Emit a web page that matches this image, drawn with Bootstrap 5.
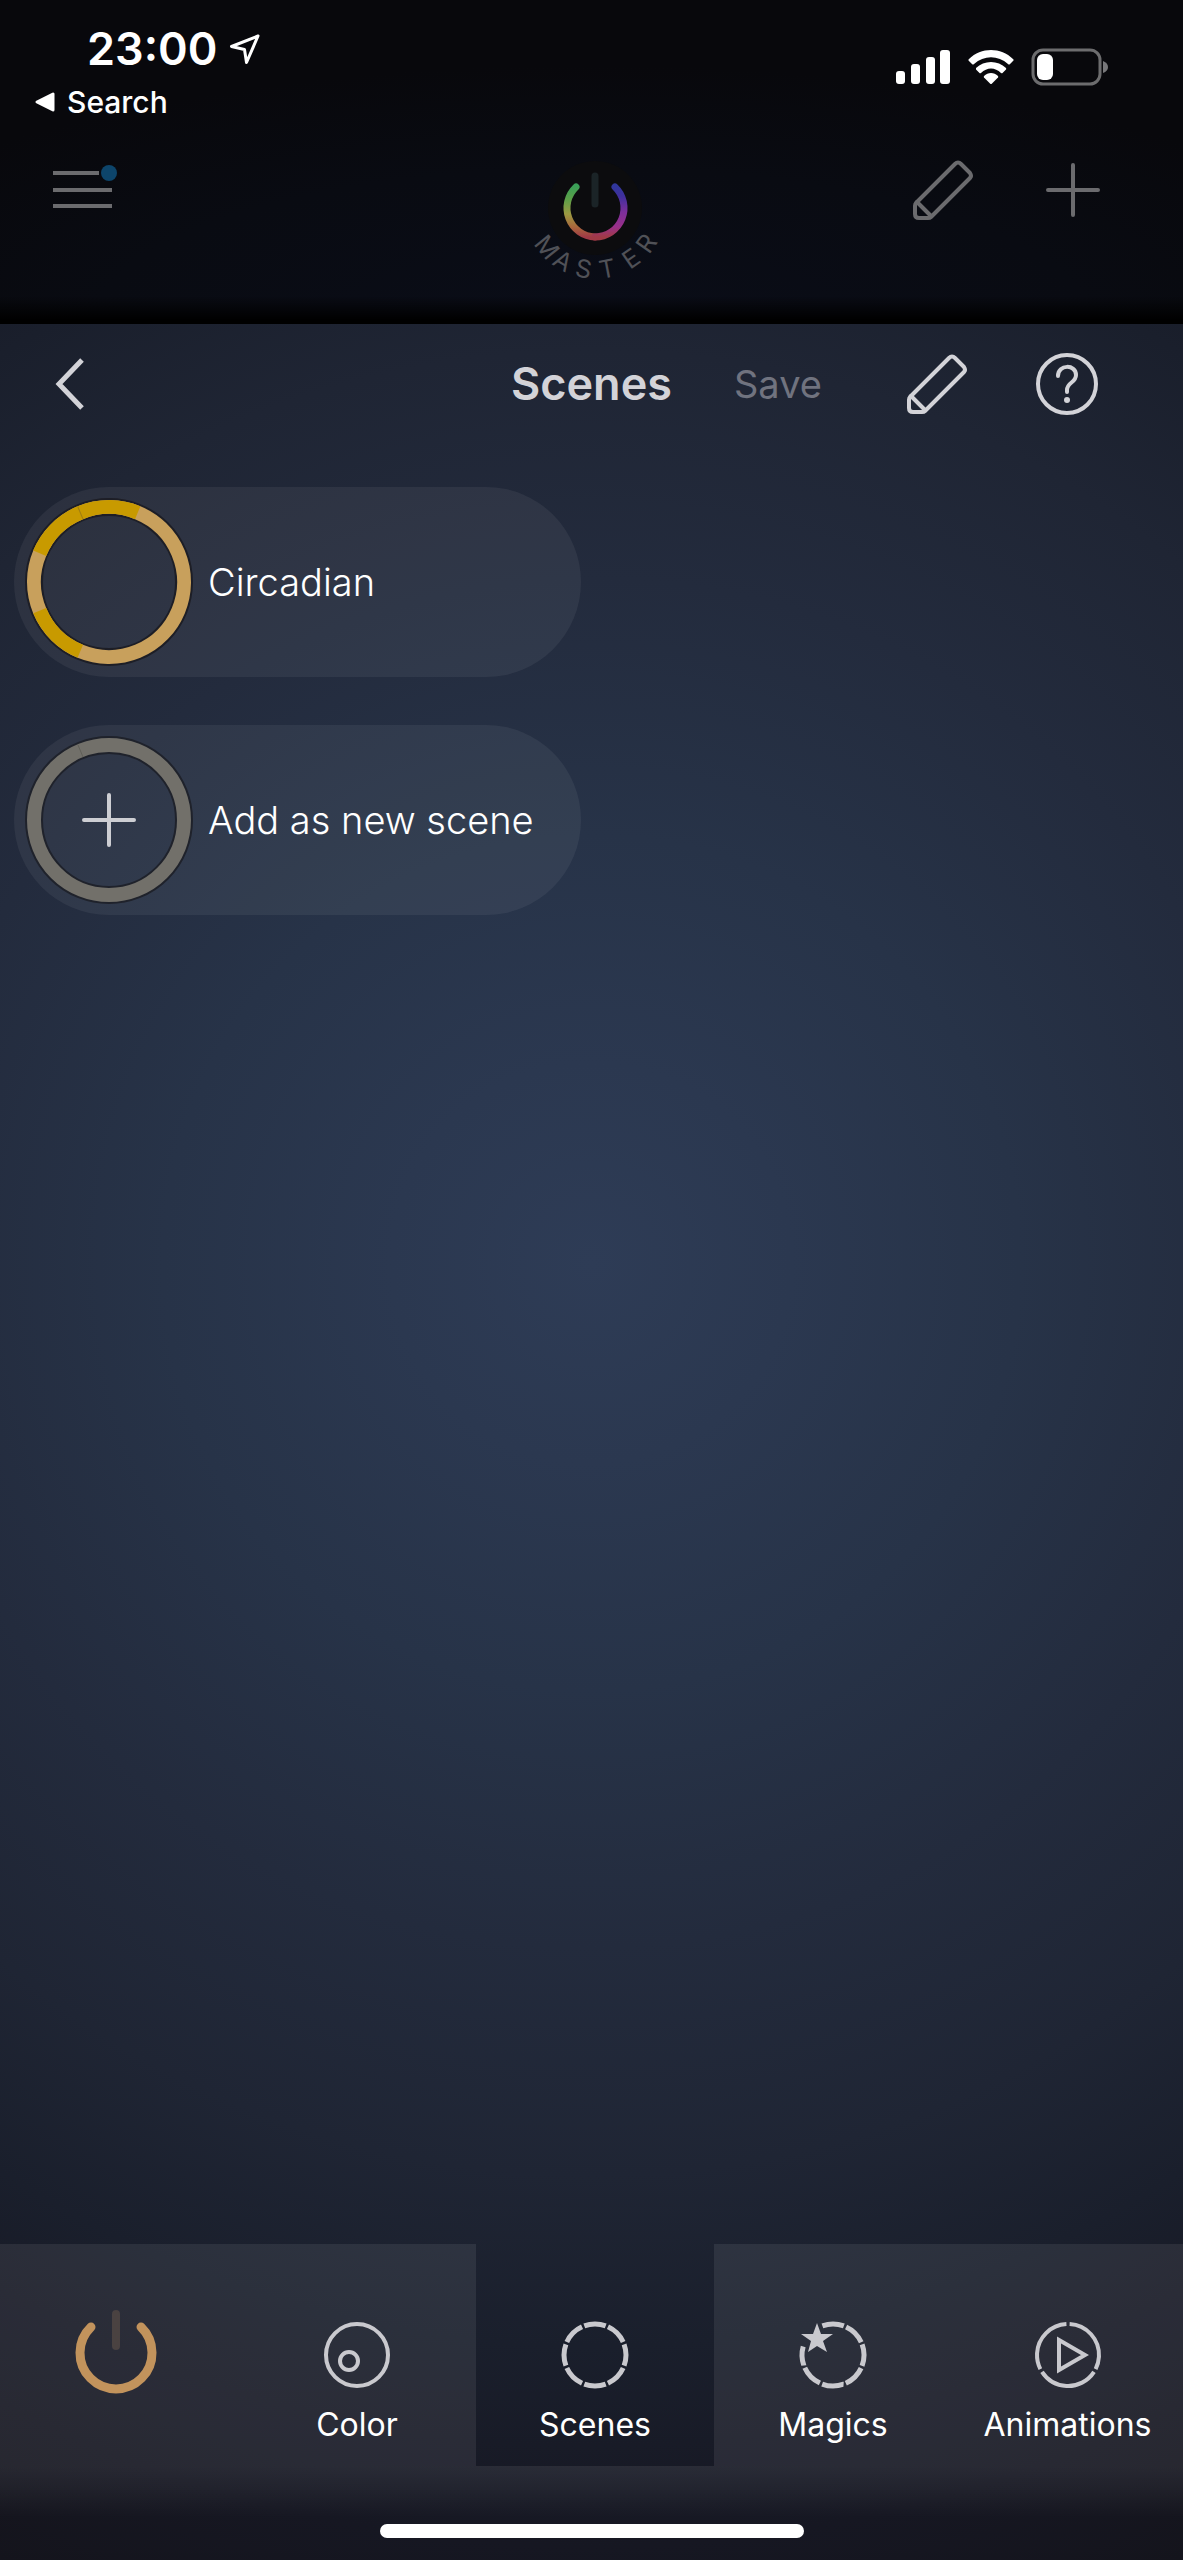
<!DOCTYPE html>
<html lang="en">
<head>
<meta charset="utf-8">
<meta name="viewport" content="width=device-width, initial-scale=1">
<title>Scenes</title>
<link href="https://cdn.jsdelivr.net/npm/bootstrap@5.3.0/dist/css/bootstrap.min.css" rel="stylesheet">
<style>
  body { font-family: Inter, "Liberation Sans", sans-serif; background: #07080d; color: #fff; }
  svg { display: block; flex: none; overflow: visible; }

  .backdrop {
    background:
      linear-gradient(to top, #000 0, #000 4px, transparent 28px),
      radial-gradient(ellipse 70% 80% at 50% 100%, #0a0d18 0%, #090b12 60%, #08080c 100%);
  }
  .status-side { padding: 20px 75px 0 35px; }
  .clock { font-size: 45px; line-height: 58px; font-weight: 600; padding-left: 52px; gap: 12px; }
  .back-app { font-size: 30px; line-height: 48px; font-weight: 500; gap: 12px; }
  .back-app, .back-app:hover { color: #fff; text-decoration: none; }
  .indicators { padding-top: 29px; gap: 18px; }

  .three-part { display: grid; grid-template-columns: 1fr auto 1fr; }
  .master-bar { padding: 32px 47px 36px 53px; color: #6b6b6e; }
  .icon-btn { background: none; border: 0; padding: 0; color: inherit; }
  .icon-pair { gap: 66px; padding-right: 31px; }

  .sheet {
    background: radial-gradient(circle farthest-corner at 50% 42%,
      #2e3c56 0%, #2b3850 14%, #273348 30%, #232b3d 48%, #1f2534 64%, #1a1f2c 76%, #161722 90%, #14141c 100%);
  }
  .sheet-head { height: 120px; padding: 0 55px; color: #d3d3d8; }
  .sheet-title { font-size: 45px; line-height: 56px; font-weight: 600; }
  .save-btn { font-size: 38px; line-height: 48px; color: #70737f; margin-left: 62px; }
  .sheet-head .icon-pair { padding-right: 29px; }

  .scene-grid { display: grid; grid-template-columns: 1fr 1fr; gap: 48px 21px; padding: 43px 14px; }
  .scene-pill {
    grid-column: 1; height: 190px; border: 0; border-radius: 95px; padding: 0 12px; gap: 16px;
    background: rgba(255, 255, 255, .06); color: #fff; font-size: 38px; line-height: 48px; font-weight: 300;
  }

  .tab-strip { display: grid; grid-template-columns: repeat(4, 238fr) 231fr; }
  .tab-item {
    height: 222px; gap: 13px; padding-top: 72px; font-size: 32px; line-height: 40px;
    background: rgba(255, 255, 255, .08); color: #fff; text-decoration: none;
  }
  .tab-item:hover { color: #fff; }
  .tab-item.is-current { background: none; }
  .tab-item svg { color: #c9c9ce; }
  .power-tab { background: rgba(255, 255, 255, .08); padding: 64px 6px 0 0; height: 222px; }
  .home-zone {
    height: 94px; padding-bottom: 22px;
    background: linear-gradient(rgba(255, 255, 255, .08), rgba(255, 255, 255, .05) 22%, transparent 55%);
  }
  .home-pill { width: 424px; height: 14px; border-radius: 7px; background: #fff; }
</style>
</head>
<body class="d-flex flex-column min-vh-100">

<svg width="0" height="0" class="position-absolute" aria-hidden="true">
  <defs>
    <linearGradient id="ringLeft" gradientUnits="userSpaceOnUse" x1="0" y1="28" x2="0" y2="79">
      <stop offset="0" stop-color="#3a9f57"/><stop offset=".25" stop-color="#5a9f48"/><stop offset=".55" stop-color="#9c9a42"/><stop offset=".8" stop-color="#a9683c"/><stop offset="1" stop-color="#a03a46"/>
    </linearGradient>
    <linearGradient id="ringRight" gradientUnits="userSpaceOnUse" x1="0" y1="28" x2="0" y2="79">
      <stop offset="0" stop-color="#30379c"/><stop offset=".2" stop-color="#3f2f9c"/><stop offset=".5" stop-color="#7a2f9a"/><stop offset=".8" stop-color="#99308a"/><stop offset="1" stop-color="#a03a46"/>
    </linearGradient>
    <symbol id="pencil" viewBox="0 0 64 64">
      <g fill="none" stroke="currentColor" stroke-width="4" stroke-linejoin="round" stroke-linecap="round">
        <path d="M5 45 L44 6 Q47 3 50 6 L59 15 Q61 18 59 20 L20 59 Q19 60 17 60 L8 60 Q4 60 4 56 L4 48 Q4 46 5 45 Z"/>
        <path d="M6 44 L20 58"/>
      </g>
    </symbol>
    <symbol id="plus" viewBox="0 0 64 64">
      <path d="M32 7 V57 M7 32 H57" fill="none" stroke="currentColor" stroke-width="4" stroke-linecap="round"/>
    </symbol>
  </defs>
</svg>

<header class="backdrop">
  <div class="status-side d-flex justify-content-between align-items-start">
    <div>
      <div class="clock d-flex align-items-center">
        <span>23:00</span>
        <svg width="32" height="32" viewBox="0 0 32 32" aria-hidden="true"><path d="M29 3 L2.500 13.500 L15.500 16.500 L17.500 29.500 Z" fill="none" stroke="#fff" stroke-width="3" stroke-linejoin="round"/></svg>
      </div>
      <a href="#" class="back-app d-flex align-items-center">
        <svg width="20" height="20" viewBox="0 0 20 20" aria-hidden="true"><path d="M2 10 L18 2 V18 Z" fill="#fff" stroke="#fff" stroke-width="3" stroke-linejoin="round"/></svg>
        <span>Search</span>
      </a>
    </div>
    <div class="indicators d-flex align-items-center">
      <svg width="54" height="34" viewBox="0 0 54 34" fill="#fff" role="img" aria-label="Signal">
        <rect x="0" y="21" width="9" height="13" rx="3"/><rect x="15" y="14" width="9" height="20" rx="3"/><rect x="30" y="7" width="9" height="27" rx="3"/><rect x="44" y="0" width="10" height="34" rx="3"/>
      </svg>
      <svg width="46" height="34" viewBox="0 0 46 34" fill="#fff" role="img" aria-label="Wi-Fi">
        <path d="M0.500 10.500 Q0 9.500 1 9 C13 -3 33 -3 45 9 Q46 9.500 45.500 10.500 L42 14 Q41 15 40 14 C30 5 16 5 6 14 Q5 15 4 14 Z"/>
        <path d="M8 18 C16 10 30 10 38 18 Q38.500 19 38 19.500 L34.500 23 Q34 23.500 33 23 C27 17 19 17 13 23 Q12 23.500 11.500 23 L8 19.500 Z"/>
        <path d="M16 26 C20 22 26 22 30 26 Q30.500 27 30 27.500 L24 33.500 Q23 34.500 22 33.500 L16 27.500 Q15.500 27 16 26 Z"/>
      </svg>
      <svg width="76" height="36" viewBox="0 0 76 36" role="img" aria-label="Battery low">
        <rect x="1" y="1" width="67" height="34" rx="10" fill="none" stroke="#6c6c6e" stroke-width="3"/>
        <rect x="5" y="5" width="16" height="26" rx="6" fill="#fff"/>
        <path d="M71 12 Q76 14 76 18 Q76 22 71 24 Z" fill="#77777a"/>
      </svg>
    </div>
  </div>

  <div class="master-bar three-part align-items-start">
    <button type="button" class="icon-btn me-auto" aria-label="Menu">
      <svg width="64" height="64" viewBox="0 0 64 64"><path d="M0 15 H46 M0 32 H59 M0 48 H59" fill="none" stroke="currentColor" stroke-width="4"/><circle cx="56" cy="15" r="8" fill="#0d456b"/></svg>
    </button>
    <button type="button" class="icon-btn" aria-label="Master power">
      <svg width="140" height="130" viewBox="0 0 140 130">
        <circle cx="70" cy="50" r="47" fill="#0c0c0e"/>
        <path d="M70 18 V46" stroke="#1b2427" stroke-width="7" stroke-linecap="round"/>
        <path d="M51 29 A29 29 0 0 0 70 79" fill="none" stroke="url(#ringLeft)" stroke-width="7" stroke-linecap="round"/>
        <path d="M90 29 A29 29 0 0 1 70 79" fill="none" stroke="url(#ringRight)" stroke-width="7" stroke-linecap="round"/>
        <text x="8 26 49 76 105 124" y="86 106 118 121 112 97" rotate="51 31 11 -11 -35 -55" font-size="25" font-weight="400" fill="#505157">MASTER</text>
      </svg>
    </button>
    <div class="icon-pair d-flex justify-content-end">
      <button type="button" class="icon-btn" aria-label="Edit"><svg width="64" height="64"><use href="#pencil"/></svg></button>
      <button type="button" class="icon-btn" aria-label="Add"><svg width="64" height="64"><use href="#plus"/></svg></button>
    </div>
  </div>
</header>

<div class="sheet d-flex flex-column flex-grow-1">
  <div class="sheet-head three-part align-items-center">
    <button type="button" class="icon-btn me-auto" aria-label="Back">
      <svg width="30" height="52" viewBox="0 0 30 52"><path d="M27 2 L4 26 L27 50" fill="none" stroke="currentColor" stroke-width="5"/></svg>
    </button>
    <h1 class="sheet-title m-0">Scenes</h1>
    <div class="d-flex align-items-center justify-content-between">
      <button type="button" class="icon-btn save-btn">Save</button>
      <div class="icon-pair d-flex">
        <button type="button" class="icon-btn" aria-label="Edit scenes"><svg width="64" height="64"><use href="#pencil"/></svg></button>
        <button type="button" class="icon-btn" aria-label="Help">
          <svg width="64" height="64" viewBox="0 0 64 64" fill="none" stroke="currentColor" stroke-width="4">
            <circle cx="32" cy="32" r="29"/>
            <path d="M23 24 C23 12 41 12 41 23 C41 31 32 30 32 38 V40" stroke-linecap="round"/>
            <circle cx="32" cy="48" r="3" fill="currentColor" stroke="none"/>
          </svg>
        </button>
      </div>
    </div>
  </div>

  <main class="scene-grid flex-grow-1 align-content-start">
    <button type="button" class="scene-pill d-flex align-items-center text-start">
      <svg width="166" height="166" viewBox="-83 -83 166 166" fill="none" stroke-width="14" aria-hidden="true">
        <circle r="75" stroke="#1d1e26" stroke-width="18"/>
        <g transform="rotate(-67.500)">
          <circle r="75" stroke="#c8a05c"/>
          <path d="M-75 0 A75 75 0 0 1 -53 -53" stroke="#c89a00"/>
          <path d="M0 -75 A75 75 0 0 1 75 0" stroke="#c89a00"/>
          <path d="M48 -48 L58 -58" stroke="#a07d10" stroke-width="1"/>
        </g>
      </svg>
      <span>Circadian</span>
    </button>
    <button type="button" class="scene-pill d-flex align-items-center text-start">
      <svg width="166" height="166" viewBox="-83 -83 166 166" fill="none" aria-hidden="true">
        <circle r="75" stroke="#1f222b" stroke-width="18"/>
        <circle r="75" stroke="#72706a" stroke-width="14"/>
        <path d="M-26 -63 L-31 -75" stroke="#605f58" stroke-width="1"/>
        <path d="M0 -25 V25 M-25 0 H25" stroke="#cdced3" stroke-width="4" stroke-linecap="round"/>
      </svg>
      <span>Add as new scene</span>
    </button>
  </main>

  <footer>
    <nav class="tab-strip" aria-label="Modes">
      <button type="button" class="icon-btn power-tab d-flex justify-content-center" aria-label="Power">
        <svg width="90" height="90" viewBox="0 0 90 90" fill="none" stroke-linecap="round">
          <path d="M45 6 V38" stroke="#4a4241" stroke-width="8"/>
          <path d="M20 19 A36 36 0 1 0 70 19" stroke="#c2935c" stroke-width="9"/>
        </svg>
      </button>
      <a href="#" class="tab-item d-flex flex-column align-items-center">
        <svg width="68" height="76" viewBox="0 0 68 76" fill="none" stroke="currentColor" stroke-width="4" aria-hidden="true"><circle cx="34" cy="39" r="31"/><circle cx="26" cy="45" r="9"/></svg>
        <span>Color</span>
      </a>
      <a href="#" class="tab-item is-current d-flex flex-column align-items-center" aria-current="page">
        <svg width="68" height="76" viewBox="0 0 68 76" fill="none" stroke="currentColor" stroke-width="5" aria-hidden="true"><circle cx="34" cy="39" r="31" pathLength="80" stroke-dasharray="9 1" stroke-dashoffset="4.500"/></svg>
        <span>Scenes</span>
      </a>
      <a href="#" class="tab-item d-flex flex-column align-items-center">
        <svg width="68" height="76" viewBox="0 0 68 76" fill="none" stroke="currentColor" stroke-width="5" aria-hidden="true">
          <g transform="rotate(-110 34 39)"><circle cx="34" cy="39" r="31" pathLength="80" stroke-dasharray="9 1 9 1 9 1 9 1 9 1 9 1 8 12"/></g>
          <path d="M18 7 L22 18 L34 18 L24 25 L28 36 L18 30 L9 36 L12 25 L2 18 L14 18 Z" fill="currentColor" stroke="none"/>
        </svg>
        <span>Magics</span>
      </a>
      <a href="#" class="tab-item d-flex flex-column align-items-center">
        <svg width="68" height="76" viewBox="0 0 68 76" fill="none" stroke="currentColor" stroke-width="4" aria-hidden="true">
          <g transform="rotate(-87 34 39)"><circle cx="34" cy="39" r="31" pathLength="120" stroke-dasharray="38 2"/></g>
          <path d="M25 24 V54 L51 39 Z"/>
        </svg>
        <span>Animations</span>
      </a>
    </nav>
    <div class="home-zone d-flex justify-content-center align-items-end"><div class="home-pill"></div></div>
  </footer>
</div>

<script src="https://cdn.jsdelivr.net/npm/bootstrap@5.3.0/dist/js/bootstrap.bundle.min.js"></script>
</body>
</html>
